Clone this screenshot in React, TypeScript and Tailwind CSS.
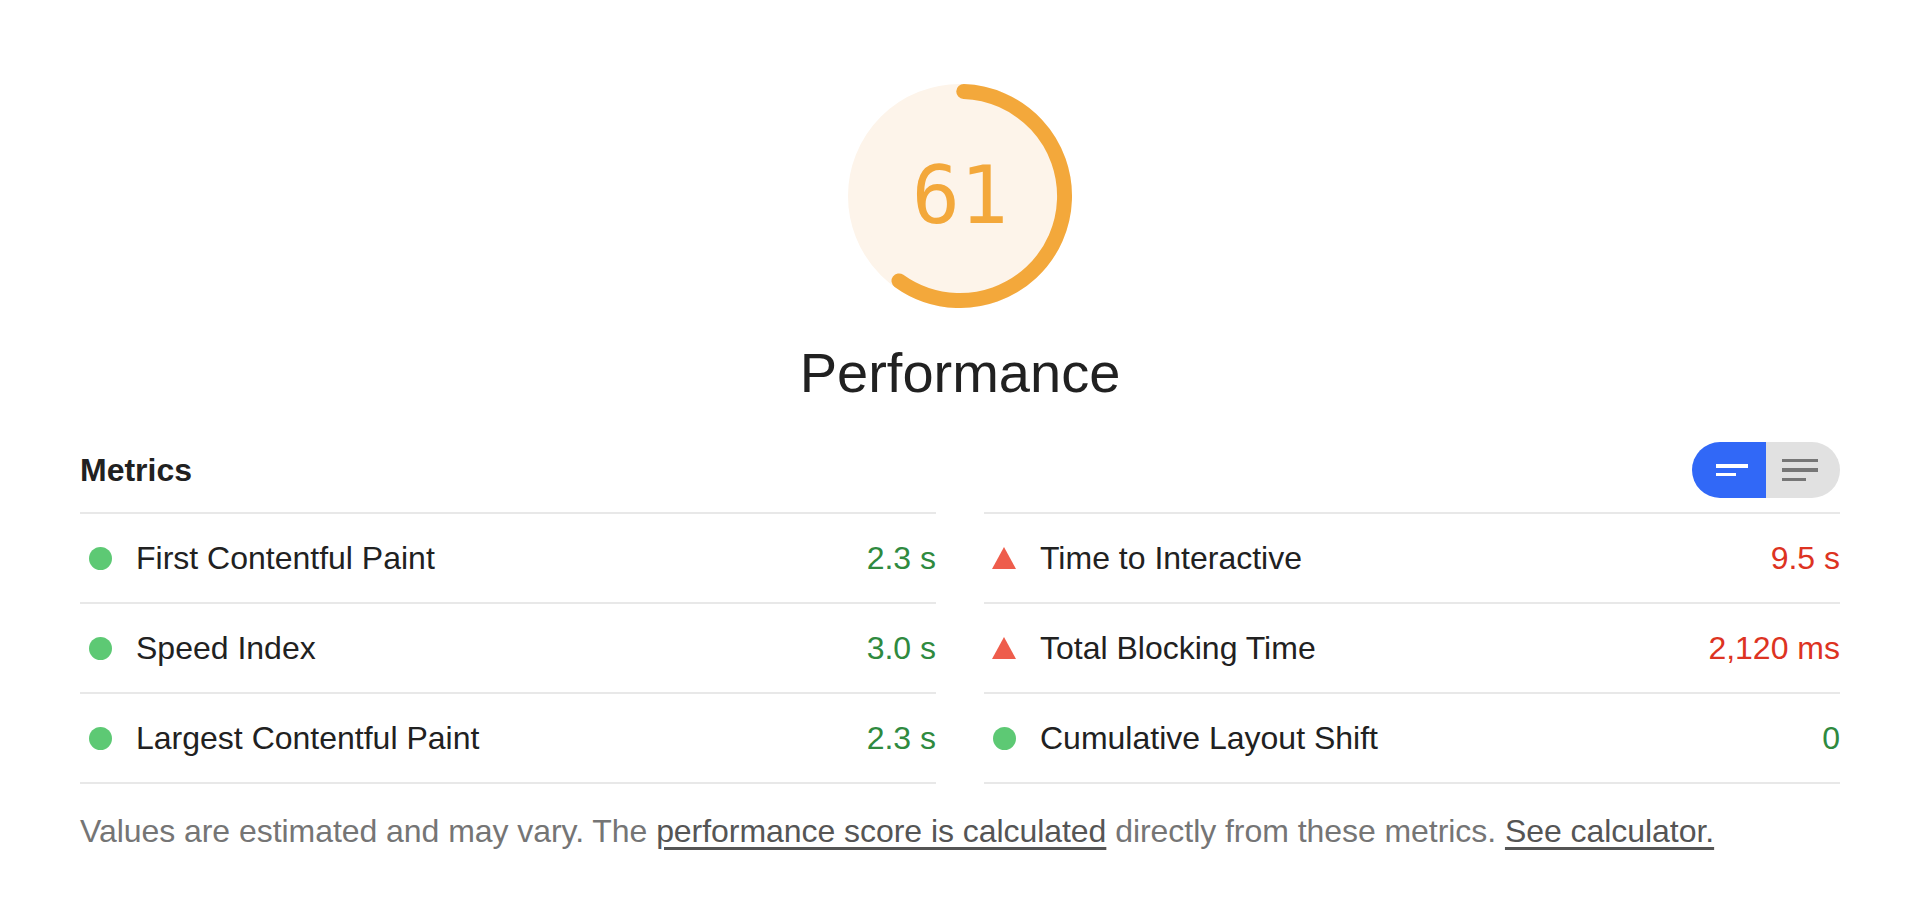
import React from "react";

type Status = "pass" | "fail";

interface Metric {
  label: string;
  value: string;
  status: Status;
}

const leftMetrics: Metric[] = [
  { label: "First Contentful Paint", value: "2.3 s", status: "pass" },
  { label: "Speed Index", value: "3.0 s", status: "pass" },
  { label: "Largest Contentful Paint", value: "2.3 s", status: "pass" },
];

const rightMetrics: Metric[] = [
  { label: "Time to Interactive", value: "9.5 s", status: "fail" },
  { label: "Total Blocking Time", value: "2,120 ms", status: "fail" },
  { label: "Cumulative Layout Shift", value: "0", status: "pass" },
];

function Gauge({ score }: { score: number }) {
  const radius = 56;
  const strokeWidth = 8;
  const circ = 2 * Math.PI * radius;
  // leave room for the round caps so the arc length reads right
  const dash = Math.max((score / 100) * circ - 0.75 * strokeWidth, 0.01);
  const rotate = -90 + ((0.25 * strokeWidth) / circ) * 360;

  return (
    <div className="grid h-[224px] w-[224px] place-items-center">
      <svg viewBox="0 0 120 120" className="h-[224px] w-[224px] [grid-area:1/1]">
        <circle cx="60" cy="60" r={radius} fill="#fdf4ea" stroke="#fdf4ea" strokeWidth={strokeWidth} />
        <circle
          cx="60"
          cy="60"
          r={radius}
          fill="none"
          stroke="#f3a83b"
          strokeWidth={strokeWidth}
          strokeLinecap="round"
          strokeDasharray={`${dash} ${circ}`}
          transform={`rotate(${rotate} 60 60)`}
        />
      </svg>
      <span className="font-['DejaVu_Sans_Mono',monospace] text-[80px] leading-none text-[#f3a83b] [grid-area:1/1]">
        {score}
      </span>
    </div>
  );
}

function StatusIcon({ status }: { status: Status }) {
  if (status === "fail") {
    return (
      <svg width="24" height="22" viewBox="0 0 24 22" className="shrink-0">
        <polygon points="12,0 24,22 0,22" fill="#ee5d4c" />
      </svg>
    );
  }
  return (
    <span className="flex h-[22px] w-[24px] shrink-0 items-center justify-center">
      <span className="h-[23px] w-[23px] rounded-full bg-[#5dc974]" />
    </span>
  );
}

function MetricColumn({ metrics }: { metrics: Metric[] }) {
  return (
    <div className="border-b-2 border-[#e8e8e8]">
      {metrics.map((m) => (
        <div key={m.label} className="flex h-[90px] items-center border-t-2 border-[#e8e8e8] pl-2">
          <StatusIcon status={m.status} />
          <span className="ml-[24px] flex-1 text-[32px] leading-none text-[#212121]">{m.label}</span>
          <span
            className={`text-[32px] leading-none ${m.status === "pass" ? "text-[#2f8a3f]" : "text-[#dd3322]"}`}
          >
            {m.value}
          </span>
        </div>
      ))}
    </div>
  );
}

function ViewToggle() {
  return (
    <div className="flex h-[56px] overflow-hidden rounded-full">
      <button type="button" className="flex w-[74px] flex-col items-start justify-center gap-[5px] bg-[#3168f7] pl-[24px]">
        <span className="h-[3.5px] w-[32px] bg-white" />
        <span className="h-[3.5px] w-[20px] bg-white" />
      </button>
      <button type="button" className="flex w-[74px] flex-col items-start justify-center gap-[6px] bg-[#e1e1e1] pl-[16px]">
        <span className="h-[3.5px] w-[36px] bg-[#777777]" />
        <span className="h-[3.5px] w-[36px] bg-[#777777]" />
        <span className="h-[3.5px] w-[24px] bg-[#777777]" />
      </button>
    </div>
  );
}

export default function App() {
  return (
    <div className="min-h-screen bg-white pl-[80px] pt-[84px] font-['Liberation_Sans',Arial,sans-serif]">
      <div className="w-[1760px]">
        {/* score gauge */}
        <div className="flex flex-col items-center">
          <Gauge score={61} />
          <h1 className="mt-[37px] text-[56px] leading-none text-[#212121]">Performance</h1>
        </div>

        {/* metrics */}
        <div className="mt-[41px] flex items-center justify-between pb-[14px]">
          <h2 className="text-[32px] font-bold leading-none text-[#212121]">Metrics</h2>
          <ViewToggle />
        </div>
        <div className="grid grid-cols-2 gap-x-[48px]">
          <MetricColumn metrics={leftMetrics} />
          <MetricColumn metrics={rightMetrics} />
        </div>

        <p className="mt-[31px] text-[32px] leading-none tracking-[-0.05px] text-[#757575]">
          Values are estimated and may vary. The{" "}
          <a href="#" className="text-[#555555] underline underline-offset-[5px]">
            performance score is calculated
          </a>{" "}
          directly from these metrics.{" "}
          <a href="#" className="text-[#555555] underline underline-offset-[5px]">
            See calculator.
          </a>
        </p>
      </div>
    </div>
  );
}
